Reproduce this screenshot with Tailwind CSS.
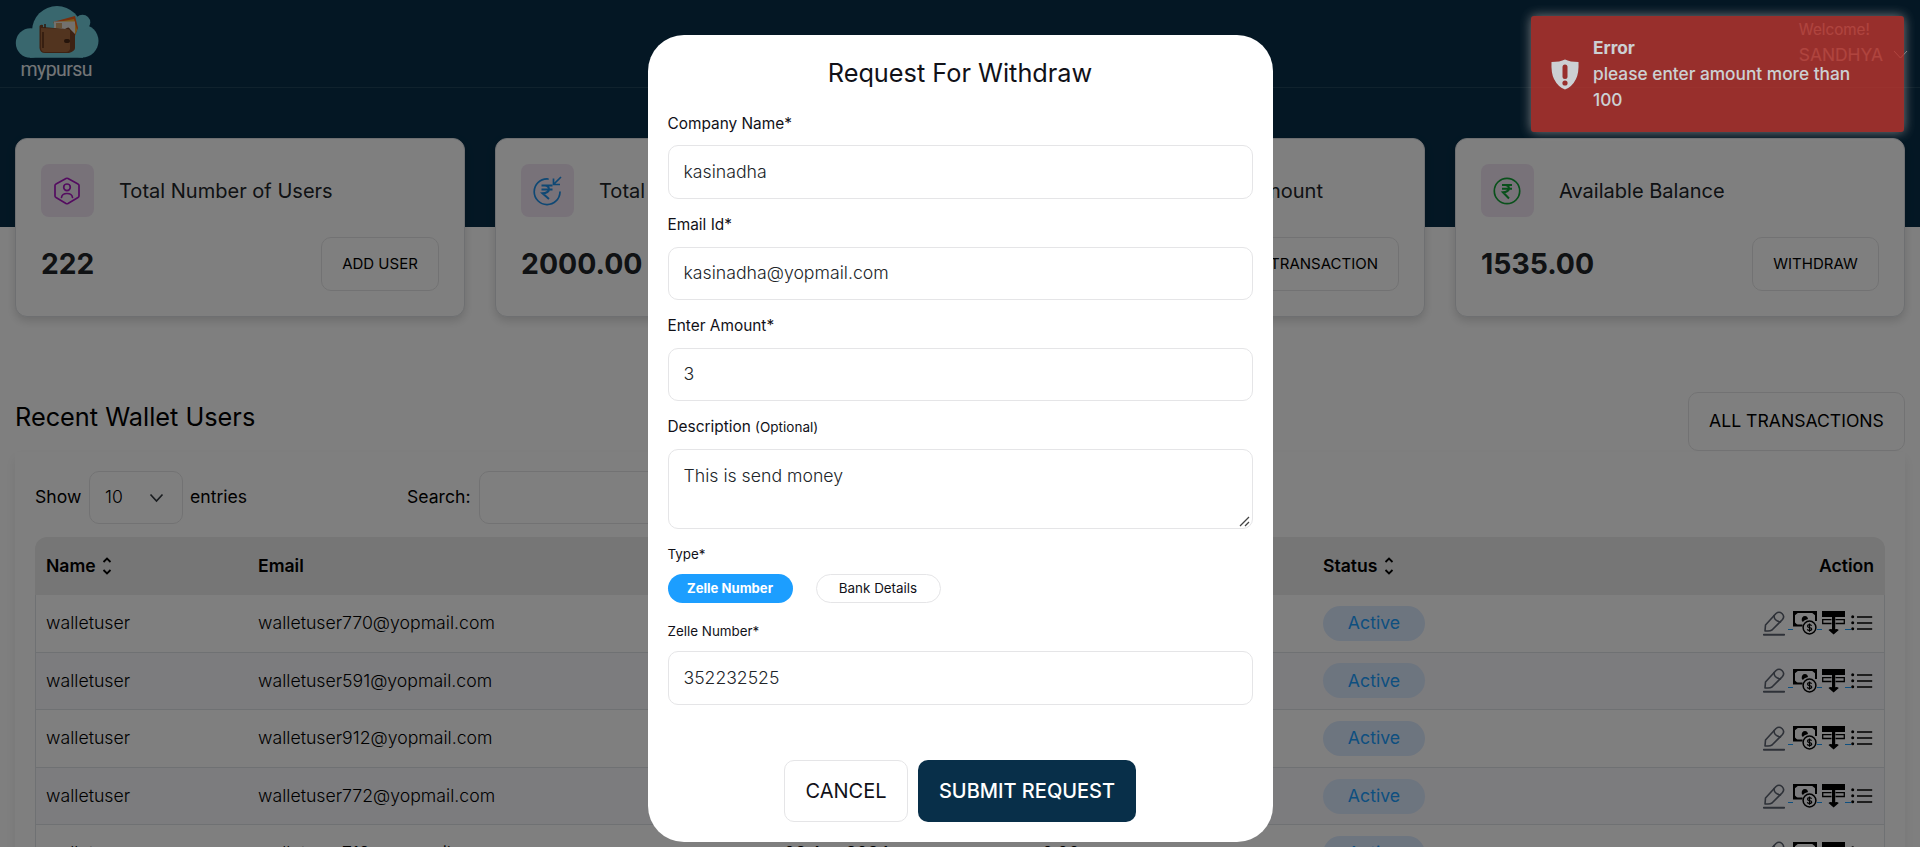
<!DOCTYPE html>
<html lang="en">
<head>
<meta charset="utf-8">
<title>mypursu</title>
<script src="https://cdn.jsdelivr.net/npm/@tailwindcss/browser@4"></script>
</head>
<body class="relative h-[847px] overflow-hidden bg-white font-['Inter',sans-serif] text-[17.6px] text-black">

<svg class="hidden">
  <symbol id="sort" viewBox="0 0 10 18"><path d="M1.500 5 5 1.500 8.500 5M1.500 13 5 16.500 8.500 13" fill="none" stroke="#000" stroke-width="1.800"/></symbol>
  <symbol id="pencil" viewBox="0 0 22 25"><g fill="none" stroke="#5c6370" stroke-width="1.600" stroke-linejoin="round" stroke-linecap="round"><path d="M2 20 2.500 14 13 2.500Q16 0 19 2.500Q22 5.500 19.500 8.500L9 19Q7.500 20 5 20Z"/><path d="M11 4.500Q11 10 17.500 11"/><path d="M.8 23.700H21.200" stroke-width="1.900"/></g></symbol>
  <symbol id="money" viewBox="0 0 24 24"><path d="M9.500 14.500H1V1h22v9" fill="none" stroke="#000" stroke-width="2"/><path d="M1 1h5L1 5ZM23 1h-5l5 4ZM1 14.500V10.500l4 4Z"/><path d="M8.700 9.500Q8.500 5 12 5Q14.500 5 15 8Q11 9 9.800 11Z"/><circle cx="16.500" cy="16.500" r="6.400" fill="none" stroke="#000" stroke-width="1.500"/><path d="M18.600 14.800Q18 13.600 16.500 13.600Q14.500 13.600 14.500 15Q14.500 16.400 16.500 16.600Q18.700 16.800 18.700 18.100Q18.700 19.500 16.500 19.500Q14.700 19.500 14.300 18.200M16.500 12.400V20.800" fill="none" stroke="#000" stroke-width="1.200"/></symbol>
  <symbol id="withdraw" viewBox="0 0 23 24"><path d="M0 0h23v6H0Z"/><path d="M9.500 8.700H.7v3.800h8.800M13.500 8.700h8.800v3.800h-8.800" fill="none" stroke="#000" stroke-width="1.300"/><path d="M10 6h3.200v12.300Q15 17.500 16.800 19L11.600 23.500 6.500 19Q8 17.500 10 18.300Z"/></symbol>
  <symbol id="list" viewBox="0 0 22 16"><path d="M6 2h15.200M6 8h15.200M6 14h15.200" stroke="#000" stroke-width="1.700"/><circle cx="1.700" cy="1.800" r="1.500"/><circle cx="1.700" cy="7.800" r="1.500"/><circle cx="1.700" cy="13.800" r="1.500"/></symbol>
</svg>

<div class="h-[227px] bg-[#082f49]">
  <header class="flex h-[88px] items-start justify-between border-b border-white/10 pl-[15px] pr-[12px]">
    <svg class="mt-1 h-[78px] w-[85px]" viewBox="0 0 85 78">
      <g fill="#72cedd"><circle cx="15.500" cy="39" r="14.700"/><circle cx="42" cy="27" r="25"/><circle cx="67" cy="37" r="16.500"/><circle cx="67.500" cy="18.500" r="7.800"/><path d="M15 26h53v27.700H15Z"/></g>
      <path d="M38 18 60 12 63 24 60 32Z" fill="#f2601c"/><path d="M38 19 59 15 62 26 59 33Z" fill="#f5b52e"/><path d="M39 17.500H60V32H39Z" fill="#e6e2dc"/><path d="M41 19h6v5h-6Z" fill="#cfa56e"/>
      <path d="M28 21Q24 20 24.500 24V44Q25 49 30 49H54Q60 47 60 44V30L55 25Q54 22 50 25L28 23Z" fill="#7a4526"/>
      <path d="M26 24 52 25Q56 25 55 29V45Q54 48 51 48H29Q26 47 26 44Z" fill="#a5683f"/>
      <path d="M28 28V44M30 20v4" stroke="#5d321a" stroke-width="1.500"/><rect x="49" y="35" width="6" height="4" rx="2" fill="#4a2816"/>
      <text x="5.500" y="71.500" font-family="Roboto" font-size="19.500" textLength="72" fill="#e8edf0">mypursu</text>
    </svg>
    <div class="pt-[18px] text-white">
      <div class="text-[15.200px] leading-[23px]">Welcome!</div>
      <div class="flex items-center gap-[10px] text-[17.400px] leading-[27px]">SANDHYA
        <svg class="h-[9px] w-[15px]" viewBox="0 0 15 9"><path d="M1 1 7.500 8 14 1" fill="none" stroke="#fff"/></svg>
      </div>
    </div>
  </header>
</div>

<section class="-mt-[89px] grid grid-cols-4 gap-[30px] px-[15px]">
  <div class="h-[179px] rounded-xl border border-[#dcdfe3] bg-white px-[25px] pt-[25px] shadow-[0_4px_10px_rgba(0,0,0,0.15)]">
    <div class="flex items-center gap-[25px]">
      <div class="flex size-[53px] items-center justify-center rounded-lg bg-[#f1e5f3] pr-px">
        <svg class="size-[28px]" viewBox="0 0 28 28" fill="none" stroke="#a818c0" stroke-width="1.700"><path d="M13 1.500Q14 1 15 1.500L25 7Q26 7.500 26 8.500V19Q26 20 25 20.500L15 26.500Q14 27 13 26.500L3 20.500Q2 20 2 19V8.500Q2 7.500 3 7Z"/><circle cx="14" cy="10.300" r="3.300"/><path d="M8.500 20.500Q9 16.500 14 16.500T19.500 20.500" stroke-linecap="round"/></svg>
      </div>
      <h3 class="pt-[2px] text-[20.050px] text-[#212529]">Total Number of Users</h3>
    </div>
    <div class="mt-[20px] flex items-center justify-between">
      <span class="text-[28.200px] font-bold text-[#212529]">222</span>
      <button class="h-[54px] w-[118px] rounded-[10px] border border-[#e5e5e7] text-[15px]">ADD USER</button>
    </div>
  </div>
  <div class="h-[179px] rounded-xl border border-[#dcdfe3] bg-white px-[25px] pt-[25px] shadow-[0_4px_10px_rgba(0,0,0,0.15)]">
    <div class="flex items-center gap-[25px]">
      <div class="flex size-[53px] items-center justify-center rounded-lg bg-[#f1e5f3] pr-px">
        <svg class="size-[30px]" viewBox="0 0 30 30" fill="none" stroke="#1e90e8" stroke-width="1.700"><path d="M16 3Q15.500 2.800 15 2.800A12.900 12.900 0 1 0 28 16" stroke-linecap="round"/><path d="M9.500 9.500H20.500M9.500 13.500H20.500M9.500 9.500H13Q17 10 17 13.500Q16.500 17 10.500 17.300L17 23" stroke-width="2"/><path d="M29 1 22 8M21.500 2.500V8.500H28"/></svg>
      </div>
      <h3 class="pt-[2px] text-[20.050px] text-[#212529]">Total Credit</h3>
    </div>
    <div class="mt-[20px] flex h-[54px] items-center justify-between">
      <span class="text-[28.400px] font-bold text-[#212529]">2000.00</span>
    </div>
  </div>
  <div class="h-[179px] rounded-xl border border-[#dcdfe3] bg-white px-[25px] pt-[25px] shadow-[0_4px_10px_rgba(0,0,0,0.15)]">
    <div class="flex h-[53px] items-center pl-[78px]">
      <h3 class="w-[244px] pt-[2px] text-right text-[20.050px] text-[#212529]">Total Debit Amount</h3>
    </div>
    <div class="mt-[20px] flex items-center justify-end">
      <button class="h-[54px] rounded-[10px] border border-[#e5e5e7] px-[20px] text-[15px]">VIEW TRANSACTION</button>
    </div>
  </div>
  <div class="h-[179px] rounded-xl border border-[#dcdfe3] bg-white px-[25px] pt-[25px] shadow-[0_4px_10px_rgba(0,0,0,0.15)]">
    <div class="flex items-center gap-[25px]">
      <div class="flex size-[53px] items-center justify-center rounded-lg bg-[#f1e5f3] pr-px">
        <svg class="size-[28px]" viewBox="0 0 28 28" fill="none" stroke="#12a136" stroke-width="1.700"><circle cx="14" cy="14" r="12.700"/><path d="M9 8H19M9 11.700H19M9 8H12.500Q16 8.500 16 11.500Q15.500 15 10 15.300L16 21.500" stroke-width="2"/></svg>
      </div>
      <h3 class="pt-[2px] text-[20.050px] text-[#212529]">Available Balance</h3>
    </div>
    <div class="mt-[20px] flex items-center justify-between">
      <span class="text-[28.400px] font-bold text-[#212529]">1535.00</span>
      <button class="h-[54px] w-[127px] rounded-[10px] border border-[#e5e5e7] text-[15px]">WITHDRAW</button>
    </div>
  </div>
</section>

<section class="mt-[75px] px-[15px]">
  <div class="flex items-start justify-between">
    <h2 class="pt-[7px] text-[25.300px] leading-[36px]">Recent Wallet Users</h2>
    <button class="h-[59px] w-[217px] rounded-[10px] border border-[#e5e5e7] text-[17.600px]">ALL TRANSACTIONS</button>
  </div>
  <div class="mt-[1px] h-[500px] px-[20px] pt-[19px] shadow-[0_6px_12px_rgba(0,0,0,0.08)]">
    <div class="flex h-[53px] items-center">
      <span class="w-[54px]">Show</span>
      <span class="flex h-[53px] w-[94px] items-center justify-between rounded-[10px] border border-[#e5e5e7] pl-[15px] pr-[18px] font-light">10
        <svg class="h-[10px] w-[15px]" viewBox="0 0 15 10"><path d="M1.500 1.500 7.500 8 13.500 1.500" fill="none" stroke="#343a40" stroke-width="1.700"/></svg>
      </span>
      <span class="ml-[7px] w-[217px]">entries</span>
      <span class="w-[72px]">Search:</span>
      <span class="h-[53px] w-[230px] rounded-[10px] border border-[#e5e5e7]"></span>
    </div>
    <div class="mt-[13px] flex h-[58px] items-center rounded-t-xl bg-[#ededed] pl-[11px] pr-[11px] font-semibold">
      <span class="flex w-[212px] items-center gap-[6px]">Name <svg class="h-[18px] w-[10px]"><use href="#sort"/></svg></span>
      <span class="w-[1065px]">Email</span>
      <span class="flex items-center gap-[6px]">Status <svg class="h-[18px] w-[10px]"><use href="#sort"/></svg></span>
      <span class="ml-auto">Action</span>
    </div>
    <div id="rows" class="border-x border-[#dee2e6] text-[17.700px] font-light"></div>
  </div>
</section>

<template id="row">
  <div class="flex h-[57.600px] items-center border-b border-[#dee2e6] pl-[10px] pr-[11px] even:bg-[#f8f8fc]">
    <span class="w-[212px]">walletuser</span>
    <span data-email class="w-[526px]"></span>
    <span data-date class="w-[258px] font-normal"></span>
    <span data-amount class="w-[281px] font-normal"></span>
    <span class="flex h-[35px] w-[102px] items-center justify-center rounded-[18px] bg-[#dbeaff] font-normal text-[#1c9eff]">Active</span>
    <span class="ml-auto flex items-center">
      <svg class="h-[25px] w-[22px]"><use href="#pencil"/></svg>
      <i class="ml-[3px] mt-[13px] h-px w-[5px] bg-[#1c9eff]"></i>
      <svg class="h-[24px] w-[24px]"><use href="#money"/></svg>
      <i class="mt-[13px] h-px w-[5px] bg-[#1c9eff]"></i>
      <svg class="h-[24px] w-[23px]"><use href="#withdraw"/></svg>
      <i class="mt-[13px] h-px w-[6px] bg-[#1c9eff]"></i>
      <svg class="h-[16px] w-[22px]"><use href="#list"/></svg>
    </span>
  </div>
</template>
<script>
for (const n of [770, 591, 912, 772, 712]) {
  const r = document.getElementById('row').content.cloneNode(true);
  r.querySelector('[data-email]').textContent = `walletuser${n}@yopmail.com`;
  if (n === 712) {
    r.querySelector('[data-date]').textContent = '08 Apr 2024';
    r.querySelector('[data-amount]').textContent = '0.00';
  }
  document.getElementById('rows').append(r);
}
</script>

<div class="absolute inset-0 flex items-start justify-center bg-black/50 pt-[35px]">
  <div class="flex h-[807px] w-[625px] flex-col rounded-[36px] bg-white px-[20px] text-[15.400px] text-[#111118]">
    <h2 class="mt-[20px] text-center text-[25.300px] leading-[36px]">Request For Withdraw</h2>
    <label class="mt-[22px] leading-[22px]">Company Name*</label>
    <div class="mt-[10px] flex h-[54px] shrink-0 items-center rounded-[10px] border border-[#e5e5e7] px-[15px] text-[17.700px] font-light text-[#212529]">kasinadha</div>
    <label class="mt-[15px] leading-[22px]">Email Id*</label>
    <div class="mt-[11px] flex h-[53px] shrink-0 items-center rounded-[10px] border border-[#e5e5e7] px-[15px] text-[17.700px] font-light text-[#212529]">kasinadha@yopmail.com</div>
    <label class="mt-[15px] leading-[22px]">Enter Amount*</label>
    <div class="mt-[11px] flex h-[53px] shrink-0 items-center rounded-[10px] border border-[#e5e5e7] px-[15px] text-[17.700px] font-light text-[#212529]">3</div>
    <label class="mt-[15px] leading-[22px]">Description <span class="text-[13.500px]">(Optional)</span></label>
    <div class="relative mt-[11px] h-[80px] shrink-0 rounded-[10px] border border-[#e5e5e7] px-[15px] pt-[13px] text-[17.700px] font-light leading-[26px] text-[#212529]">This is send money
      <svg class="absolute bottom-[1px] right-[2px] size-[11px]" viewBox="0 0 11 11"><path d="M1 10 10 1M6 10 10 6" stroke="#444" stroke-width="1.300"/></svg>
    </div>
    <label class="mt-[15px] text-[13.400px] leading-[20px]">Type*</label>
    <div class="mt-[10px] flex gap-[23px] text-[13.300px]">
      <button class="h-[29px] w-[125px] rounded-full bg-[#1c9eff] text-[13.100px] font-bold text-white">Zelle Number</button>
      <button class="h-[29px] w-[125px] rounded-full border border-[#e5e5e7] text-[13.400px]">Bank Details</button>
    </div>
    <label class="mt-[18px] text-[13.400px] leading-[20px]">Zelle Number*</label>
    <div class="mt-[10px] flex h-[54px] shrink-0 items-center rounded-[10px] border border-[#e5e5e7] px-[15px] text-[17.600px] font-light text-[#212529]">352232525</div>
    <div class="mt-[55px] flex justify-center gap-[10px] text-[20px]">
      <button class="h-[62px] w-[124px] rounded-[10px] border border-[#e5e5e7]">CANCEL</button>
      <button class="h-[62px] w-[218px] rounded-[10px] bg-[#082f49] font-medium text-white">SUBMIT REQUEST</button>
    </div>
  </div>
</div>

<div class="absolute right-[16px] top-[16px] flex h-[116px] w-[373px] rounded-[3px] bg-[#bd362f] pl-[20px] pt-[18px] text-[17.300px] text-white opacity-80 shadow-[0_0_12px_#999]">
  <svg class="mt-[25px] h-[31px] w-[28px]" viewBox="0 0 28 31"><path d="M14 .5Q19 3 27.500 3Q28 14 25 20Q21 28 14 30.500Q7 28 3 20Q0 14 .5 3Q9 3 14 .5Z" fill="#fff"/><path d="M14 8V17.500" stroke="#bd362f" stroke-width="5" stroke-linecap="round"/><circle cx="14" cy="24" r="2.600" fill="#bd362f"/></svg>
  <div class="ml-[14px] w-[275px] leading-[26px]">
    <div class="mt-[1px] font-bold">Error</div>
    <div class="font-medium">please enter amount more than 100</div>
  </div>
</div>
</body>
</html>
